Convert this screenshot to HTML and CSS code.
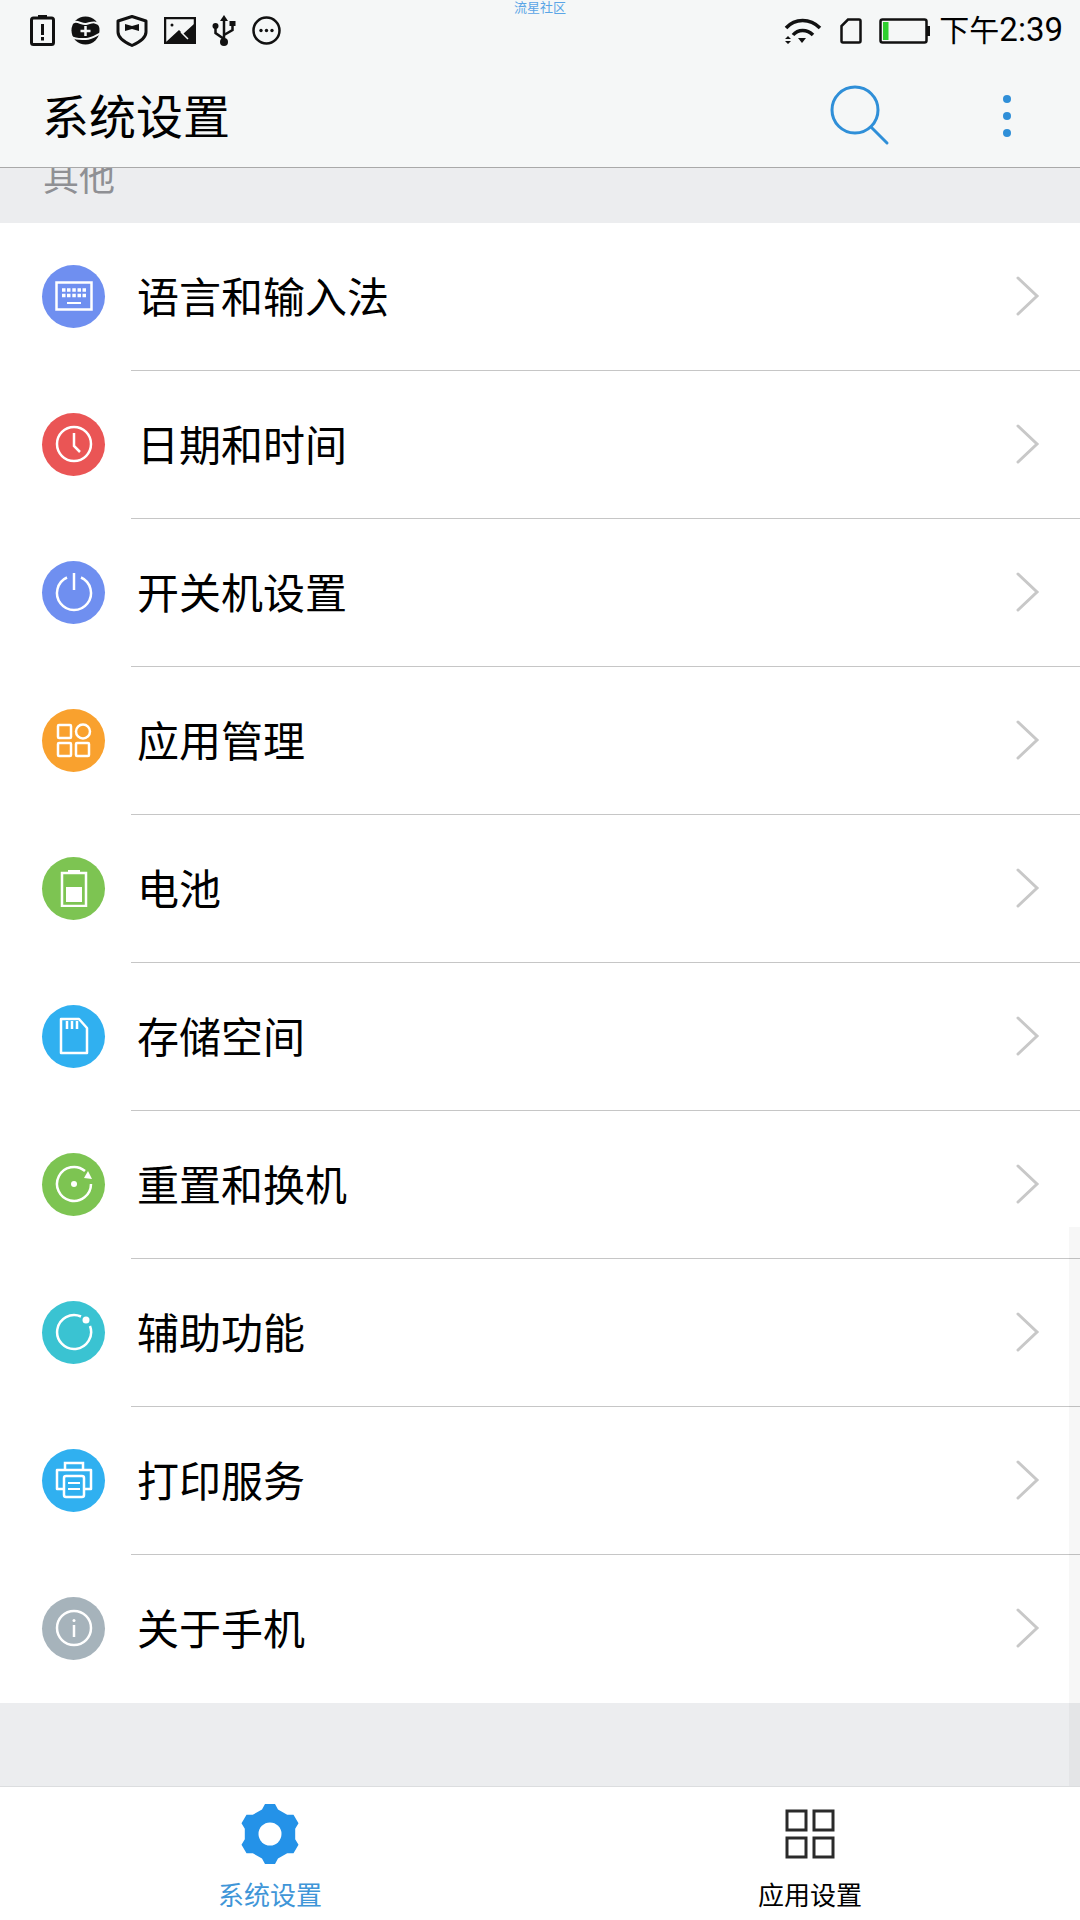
FILE: index.html
```html
<!DOCTYPE html>
<html lang="zh-CN">
<head>
  <meta charset="utf-8">
  <title>系统设置</title>
  <link rel="stylesheet" href="styles.css">
</head>
<body>
  <div class="phone">
    <span class="watermark">流星社区</span>
    <header class="top">
      <div class="status">
        <div class="status-icons">
          <!-- battery alert -->
          <svg width="25" height="31" viewBox="0 0 25 31"><path d="M8 0h9v3H8z" fill="#111"/><rect x="1.500" y="3" width="22" height="26.500" rx="2" fill="none" stroke="#111" stroke-width="3"/><path d="M12.500 9v11M12.500 22v3.500" stroke="#111" stroke-width="3" fill="none"/></svg>
          <!-- sync plus -->
          <svg width="29" height="29" viewBox="0 0 29 29"><circle cx="14.500" cy="14.500" r="14" fill="#111"/><path d="M-1 9C5 2 10 9 15 8S24 4 30 10M-1 20C5 24 10 23 15 23S24 20 30 17" fill="none" stroke="#f5f7f7" stroke-width="2"/><path d="M9.500 15h10M14.500 10v10" stroke="#f5f7f7" stroke-width="2.500"/></svg>
          <!-- shield -->
          <svg width="32" height="32" viewBox="0 0 32 32"><path d="M16 1.500L30 6v11c0 6-6 10-14 13.500C8 27 2 23 2 17V6z" fill="none" stroke="#111" stroke-width="3" stroke-linejoin="round"/><path d="M9 9l7 2 7-2v7l-7-2-7 2z" fill="#111"/></svg>
          <!-- picture -->
          <svg width="32" height="27" viewBox="0 0 32 27"><rect x="1" y="1" width="30" height="25" fill="#f5f7f7" stroke="#111" stroke-width="2.500"/><path d="M2 25L15 13l4 4L30 7v18z" fill="#111"/><path d="M17 15l7 7" stroke="#f5f7f7" stroke-width="1.500"/><circle cx="8" cy="8" r="1.500" fill="#111"/></svg>
          <!-- usb -->
          <svg width="24" height="31" viewBox="0 0 24 31"><path d="M12 4v24M12 24L3.500 18v-6M12 20l8.500-5v-5" fill="none" stroke="#111" stroke-width="2.500"/><path d="M12 0l4 6H8z" fill="#111"/><circle cx="12" cy="27" r="4" fill="#111"/><circle cx="3.500" cy="11" r="3" fill="#111"/><rect x="17.500" y="6" width="6" height="5" fill="#111"/></svg>
          <!-- more -->
          <svg width="29" height="29" viewBox="0 0 29 29"><circle cx="14.500" cy="14.500" r="13" fill="none" stroke="#111" stroke-width="2.500"/><circle cx="9" cy="14.500" r="1.700" fill="#111"/><circle cx="14.500" cy="14.500" r="1.700" fill="#111"/><circle cx="20" cy="14.500" r="1.700" fill="#111"/></svg>
        </div>
        <div class="status-right">
          <!-- wifi -->
          <svg width="38" height="28" viewBox="0 0 38 28"><path d="M2 11C11 1 26 1 36 11M9 18c5-6 14-6 20 0" fill="none" stroke="#111" stroke-width="3.500"/><path d="M14 21h8l-4 5z" fill="#111"/><path d="M1 22h6l-3-3zM1 24h6l-3 3z" fill="#111"/></svg>
          <!-- sim -->
          <svg class="sim" width="22" height="26" viewBox="0 0 22 26"><path d="M8 1.500h11a1.500 1.500 0 0 1 1.500 1.500v20a1.500 1.500 0 0 1-1.500 1.500H3A1.500 1.500 0 0 1 1.500 23V8z" fill="none" stroke="#111" stroke-width="2.500"/></svg>
          <!-- battery -->
          <svg class="batt" width="52" height="26" viewBox="0 0 52 26"><rect x="1.500" y="1.500" width="46" height="23" rx="2" fill="none" stroke="#111" stroke-width="2.500"/><rect x="4" y="4" width="5.500" height="18" fill="#2fcf2f"/><rect x="48" y="8" width="3" height="10" fill="#111"/></svg>
          <span class="clock"><span class="clock-day">下午</span>2:39</span>
        </div>
      </div>
      <div class="title-bar">
        <h1>系统设置</h1>
        <svg class="search" width="60" height="62" viewBox="0 0 60 62"><circle cx="25" cy="25" r="23" fill="none" stroke="#2f8fd8" stroke-width="3"/><path d="M41 42l16 16" stroke="#2f8fd8" stroke-width="3" stroke-linecap="round"/></svg>
        <div class="more"><i></i><i></i><i></i></div>
      </div>
    </header>

    <div class="group-label"><span>其他</span></div>

    <ul class="list">
      <li class="row">
        <span class="badge c-blue"><svg width="38" height="30" viewBox="0 0 38 30"><rect x="1.500" y="1.500" width="35" height="27" fill="none" stroke="#fff" stroke-width="2.500"/><path d="M7 9h3.500M12 9h3.500M17.300 9h3.500M22.500 9h3.500M27.500 9h3.500M7 14.500h3.500M12 14.500h3.500M17.300 14.500h3.500M22.500 14.500h3.500M27.500 14.500h3.500" stroke="#fff" stroke-width="3.500"/><path d="M12 22h14" stroke="#fff" stroke-width="2"/></svg></span>
        <span class="name">语言和输入法</span><svg class="chev" width="24" height="40" viewBox="0 0 24 40"><path d="M2 2l19 18L2 38" fill="none" stroke="#c8c8c8" stroke-width="3" stroke-linecap="round"/></svg>
      </li>
      <li class="row">
        <span class="badge c-red"><svg width="40" height="40" viewBox="0 0 40 40"><circle cx="20" cy="20" r="17" fill="none" stroke="#fff" stroke-width="2.500"/><path d="M20 9v13l6 6" fill="none" stroke="#fff" stroke-width="2.500"/></svg></span>
        <span class="name">日期和时间</span><svg class="chev" width="24" height="40" viewBox="0 0 24 40"><path d="M2 2l19 18L2 38" fill="none" stroke="#c8c8c8" stroke-width="3" stroke-linecap="round"/></svg>
      </li>
      <li class="row">
        <span class="badge c-blue"><svg width="40" height="40" viewBox="0 0 40 40"><path d="M13 5.500a17 17 0 1 0 14 0" fill="none" stroke="#fff" stroke-width="2.500"/><path d="M20 1v17" stroke="#fff" stroke-width="2.500"/></svg></span>
        <span class="name">开关机设置</span><svg class="chev" width="24" height="40" viewBox="0 0 24 40"><path d="M2 2l19 18L2 38" fill="none" stroke="#c8c8c8" stroke-width="3" stroke-linecap="round"/></svg>
      </li>
      <li class="row">
        <span class="badge c-orange"><svg width="36" height="36" viewBox="0 0 36 36"><rect x="2" y="3" width="13" height="13" rx="1" fill="none" stroke="#fff" stroke-width="2.500"/><circle cx="27" cy="9.500" r="7" fill="none" stroke="#fff" stroke-width="2.500"/><rect x="2" y="21" width="13" height="13" rx="1" fill="none" stroke="#fff" stroke-width="2.500"/><rect x="20" y="21" width="13" height="13" rx="1" fill="none" stroke="#fff" stroke-width="2.500"/></svg></span>
        <span class="name">应用管理</span><svg class="chev" width="24" height="40" viewBox="0 0 24 40"><path d="M2 2l19 18L2 38" fill="none" stroke="#c8c8c8" stroke-width="3" stroke-linecap="round"/></svg>
      </li>
      <li class="row">
        <span class="badge c-green"><svg width="30" height="38" viewBox="0 0 30 38"><path d="M9 1h12v3H9z" fill="#fff"/><rect x="3" y="4" width="24" height="33" fill="none" stroke="#fff" stroke-width="2.500"/><rect x="7" y="18" width="16" height="15" fill="#fff"/></svg></span>
        <span class="name">电池</span><svg class="chev" width="24" height="40" viewBox="0 0 24 40"><path d="M2 2l19 18L2 38" fill="none" stroke="#c8c8c8" stroke-width="3" stroke-linecap="round"/></svg>
      </li>
      <li class="row">
        <span class="badge c-sky"><svg width="32" height="38" viewBox="0 0 32 38"><path d="M3 2h18l8 9v25H3z" fill="none" stroke="#fff" stroke-width="2.500" stroke-linejoin="round"/><path d="M9 4v8M14 4v8M19 4v8" stroke="#fff" stroke-width="2.500"/></svg></span>
        <span class="name">存储空间</span><svg class="chev" width="24" height="40" viewBox="0 0 24 40"><path d="M2 2l19 18L2 38" fill="none" stroke="#c8c8c8" stroke-width="3" stroke-linecap="round"/></svg>
      </li>
      <li class="row">
        <span class="badge c-green"><svg width="40" height="40" viewBox="0 0 40 40"><path d="M31 7A17 17 0 1 0 37 20" fill="none" stroke="#fff" stroke-width="2.500"/><path d="M34 7l4 8-8-1z" fill="#fff"/><circle cx="20" cy="20" r="3" fill="#fff"/></svg></span>
        <span class="name">重置和换机</span><svg class="chev" width="24" height="40" viewBox="0 0 24 40"><path d="M2 2l19 18L2 38" fill="none" stroke="#c8c8c8" stroke-width="3" stroke-linecap="round"/></svg>
      </li>
      <li class="row">
        <span class="badge c-teal"><svg width="40" height="40" viewBox="0 0 40 40"><path d="M27 4.500A17 17 0 1 0 36 14" fill="none" stroke="#fff" stroke-width="2.500"/><circle cx="32" cy="8" r="3.500" fill="#fff"/></svg></span>
        <span class="name">辅助功能</span><svg class="chev" width="24" height="40" viewBox="0 0 24 40"><path d="M2 2l19 18L2 38" fill="none" stroke="#c8c8c8" stroke-width="3" stroke-linecap="round"/></svg>
      </li>
      <li class="row">
        <span class="badge c-sky"><svg width="38" height="38" viewBox="0 0 38 38"><path d="M10 9V2h18v7" fill="none" stroke="#fff" stroke-width="2.500"/><path d="M9 28H2V9h34v19h-7" fill="none" stroke="#fff" stroke-width="2.500" stroke-linejoin="round"/><rect x="9" y="15" width="20" height="21" rx="2" fill="none" stroke="#fff" stroke-width="2.500"/><path d="M13 22h12M13 28h12" stroke="#fff" stroke-width="2"/></svg></span>
        <span class="name">打印服务</span><svg class="chev" width="24" height="40" viewBox="0 0 24 40"><path d="M2 2l19 18L2 38" fill="none" stroke="#c8c8c8" stroke-width="3" stroke-linecap="round"/></svg>
      </li>
      <li class="row">
        <span class="badge c-grey"><svg width="40" height="40" viewBox="0 0 40 40"><circle cx="20" cy="20" r="17" fill="none" stroke="#fff" stroke-width="2.500"/><circle cx="20" cy="12.500" r="1.500" fill="#fff"/><path d="M20 17v12" stroke="#fff" stroke-width="2.500"/></svg></span>
        <span class="name">关于手机</span><svg class="chev" width="24" height="40" viewBox="0 0 24 40"><path d="M2 2l19 18L2 38" fill="none" stroke="#c8c8c8" stroke-width="3" stroke-linecap="round"/></svg>
      </li>
    </ul>

    <div class="spacer"></div>

    <nav class="tabs">
      <div class="tab on">
        <div class="tab-icon"><svg width="60" height="60" viewBox="0 0 60 60"><path d="M22 5.500L25 0h10l3 5.500 9.200 5.300 6.300-.1 5 8.600-3.300 5.400v10.600l3.300 5.400-5 8.600-6.300-.1L38 54.500 35 60H25l-3-5.500-9.200-5.300-6.300.1-5-8.600 3.300-5.400V24.700l-3.300-5.400 5-8.600 6.300.1z" fill="#2492e8"/><circle cx="30" cy="30" r="11.500" fill="#fff"/></svg></div>
        <span>系统设置</span>
      </div>
      <div class="tab">
        <div class="tab-icon"><svg width="50" height="50" viewBox="0 0 50 50"><g fill="none" stroke="#2a2a2a" stroke-width="3"><rect x="2" y="2" width="19" height="19"/><rect x="29" y="2" width="19" height="19"/><rect x="2" y="29" width="19" height="19"/><rect x="29" y="29" width="19" height="19"/></g></svg></div>
        <span>应用设置</span>
      </div>
    </nav>

    <div class="scrollbar"></div>
  </div>
</body>
</html>
```

FILE: styles.css
```css
* { box-sizing: border-box; }
html, body { margin: 0; padding: 0; }
body { background: #ecedef; font-family: "Noto Sans CJK SC", "Roboto", sans-serif; color: #000; }
h1 { margin: 0; font-weight: 400; }
ul { list-style: none; margin: 0; padding: 0; }

.phone { position: relative; display: flex; flex-direction: column; width: 1080px; height: 1920px; overflow: hidden; background: #ecedef; }
.watermark { position: absolute; top: 0; left: 514px; font-size: 13px; line-height: 14px; color: #5aa5e6; }

.top { flex: none; height: 168px; background: #f5f7f7; border-bottom: 1px solid #a9a9a9; }
.status { display: flex; align-items: center; justify-content: space-between; height: 64px; padding: 0 17px 3px 30px; }
.status-icons { display: flex; align-items: center; gap: 16px; }
.status-right { display: flex; align-items: center; }
.sim { margin-left: 18px; }
.batt { margin-left: 17px; }
.clock { margin-left: 8px; margin-bottom: 3px; font-family: "Roboto", "Noto Sans CJK SC", sans-serif; font-size: 33px; line-height: 40px; }
.clock-day { font-family: "Noto Sans CJK SC", sans-serif; font-size: 30px; }

.title-bar { display: flex; align-items: center; height: 103px; padding-left: 42px; }
.title-bar h1 { font-size: 47px; line-height: 60px; flex: 1; margin-bottom: 4px; }
.search { margin-right: 113px; }
.more { display: flex; flex-direction: column; gap: 9px; margin-right: 69px; }
.more i { display: block; width: 8px; height: 8px; border-radius: 50%; background: #2f8fd8; }

.group-label { flex: none; height: 55px; padding-left: 43px; overflow: hidden; }
.group-label span { display: block; margin-top: -15px; font-size: 36px; line-height: 44px; color: #8f9094; }

.list { flex: none; background: #fff; }
.row { display: flex; align-items: center; height: 148px; padding: 0 0 2px 42px; position: relative; }
.row::after { content: ""; position: absolute; left: 131px; right: 0; bottom: 0; height: 1px; background: #c6c6c6; }
.row:last-child::after { display: none; }
.badge { flex: none; display: flex; align-items: center; justify-content: center; width: 63px; height: 63px; border-radius: 50%; }
.name { flex: 1; margin: 0 0 3px 32px; font-size: 42px; line-height: 60px; }
.chev { flex: none; margin-right: 40px; }

.c-blue { background: #6f8ff0; }
.c-red { background: #ea5555; }
.c-orange { background: #f9a12e; }
.c-green { background: #7dc452; }
.c-sky { background: #30b0f0; }
.c-teal { background: #3ac3d2; }
.c-grey { background: #a6b3bb; }

.spacer { flex: 1; }

.tabs { flex: none; display: flex; height: 134px; background: #fff; border-top: 1px solid #dcdddf; }
.tab { flex: 1; display: flex; flex-direction: column; align-items: center; gap: 13px; padding-top: 17px; font-size: 26px; line-height: 34px; }
.tab-icon { display: flex; align-items: center; justify-content: center; height: 60px; }
.tab.on { color: #3f96d8; }

.scrollbar { position: absolute; top: 1227px; right: 0; width: 11px; height: 559px; background: rgba(0, 0, 0, .03); }
```
